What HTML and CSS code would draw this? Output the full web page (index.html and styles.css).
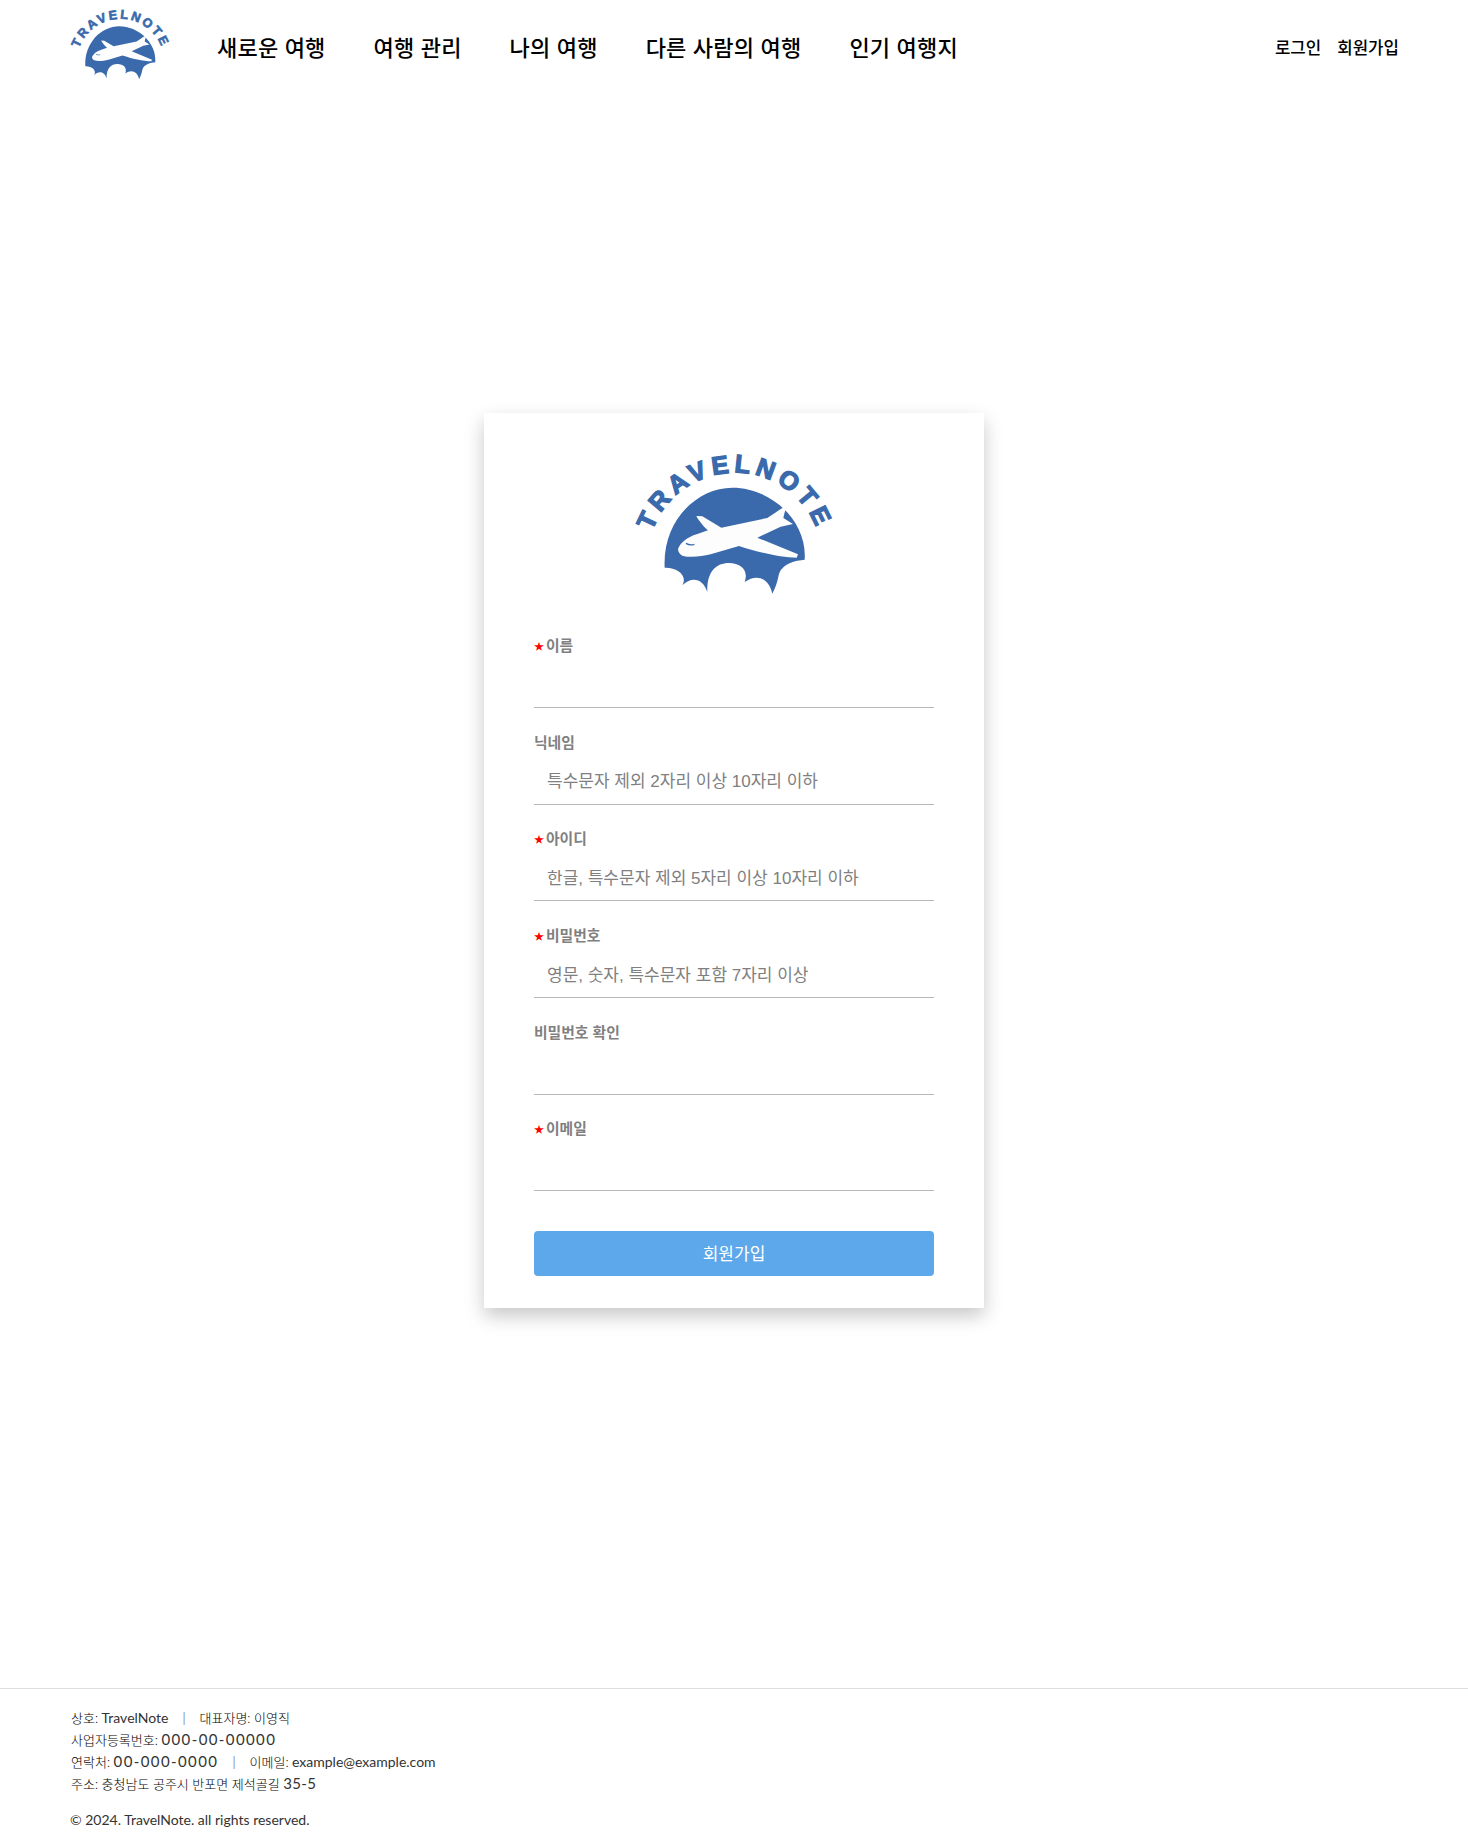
FILE: index.html
```html
<!DOCTYPE html>
<html lang="ko">
<head>
<meta charset="utf-8">
<title>TravelNote 회원가입</title>
<link rel="stylesheet" href="styles.css">
</head>
<body>
<header class="site-header">
  <svg class="logo logo-small" viewBox="100 50 600 450" aria-label="TravelNote">
    <defs><path id="arc-a" d="M140 390 A263 263 0 0 1 666 390"/></defs>
    <text class="logo-word"><textPath href="#arc-a" startOffset="50%" text-anchor="middle">TRAVELNOTE</textPath></text>
    <path class="dome" d="M192 412C185 270 290 172 395 172C510 172 620 270 612 388C585 390 545 400 535 430C530 455 525 470 515 490C505 445 470 428 432 455C445 420 420 398 385 398C345 398 318 425 320 485C305 440 270 440 245 465C262 435 228 410 192 412Z"/>
    <path class="plane" d="M232 356C240 335 262 320 288 312L322 300C310 290 295 272 287 257L305 258L362 292L500 263C518 252 532 240 547 232L555 236C552 245 550 254 548 263L577 281L540 289L470 322L592 372L588 382C540 382 470 365 415 347L330 372C300 380 265 382 245 376C238 372 232 365 232 356Z"/>
    <path class="cockpit" d="M256 339C264 344 272 345 281 342"/>
  </svg>
  <nav class="main-nav">
    <a>새로운 여행</a>
    <a>여행 관리</a>
    <a>나의 여행</a>
    <a>다른 사람의 여행</a>
    <a>인기 여행지</a>
  </nav>
  <div class="auth-links">
    <a>로그인</a>
    <a>회원가입</a>
  </div>
</header>

<main class="page-main">
  <form class="signup-card">
    <svg class="logo logo-large" viewBox="100 50 600 450" aria-label="TravelNote">
      <defs><path id="arc-b" d="M140 390 A263 263 0 0 1 666 390"/></defs>
      <text class="logo-word"><textPath href="#arc-b" startOffset="50%" text-anchor="middle">TRAVELNOTE</textPath></text>
      <path class="dome" d="M192 412C185 270 290 172 395 172C510 172 620 270 612 388C585 390 545 400 535 430C530 455 525 470 515 490C505 445 470 428 432 455C445 420 420 398 385 398C345 398 318 425 320 485C305 440 270 440 245 465C262 435 228 410 192 412Z"/>
      <path class="plane" d="M232 356C240 335 262 320 288 312L322 300C310 290 295 272 287 257L305 258L362 292L500 263C518 252 532 240 547 232L555 236C552 245 550 254 548 263L577 281L540 289L470 322L592 372L588 382C540 382 470 365 415 347L330 372C300 380 265 382 245 376C238 372 232 365 232 356Z"/>
      <path class="cockpit" d="M256 339C264 344 272 345 281 342"/>
    </svg>

    <div class="field">
      <label class="field-label"><span class="req">★</span>이름</label>
      <input class="field-input" type="text">
    </div>
    <div class="field">
      <label class="field-label">닉네임</label>
      <input class="field-input" type="text" placeholder="특수문자 제외 2자리 이상 10자리 이하">
    </div>
    <div class="field">
      <label class="field-label"><span class="req">★</span>아이디</label>
      <input class="field-input" type="text" placeholder="한글, 특수문자 제외 5자리 이상 10자리 이하">
    </div>
    <div class="field">
      <label class="field-label"><span class="req">★</span>비밀번호</label>
      <input class="field-input" type="text" placeholder="영문, 숫자, 특수문자 포함 7자리 이상">
    </div>
    <div class="field">
      <label class="field-label">비밀번호 확인</label>
      <input class="field-input" type="text">
    </div>
    <div class="field">
      <label class="field-label"><span class="req">★</span>이메일</label>
      <input class="field-input" type="text">
    </div>
    <button class="submit-btn" type="button">회원가입</button>
  </form>
</main>

<footer class="site-footer">
  <p>상호: <span class="en">TravelNote</span><span class="sep">|</span>대표자명: 이영직</p>
  <p>사업자등록번호: <span class="num">000-00-00000</span></p>
  <p>연락처: <span class="num">00-000-0000</span><span class="sep">|</span>이메일: <span class="en">example@example.com</span></p>
  <p>주소: 충청남도 공주시 반포면 제석골길 <span class="num num-short">35-5</span></p>
  <p class="copyright"><span class="en">© 2024. TravelNote. all rights reserved.</span></p>
</footer>
</body>
</html>
```

FILE: styles.css
```css
* { box-sizing: border-box; }

html, body { margin: 0; padding: 0; }

body {
  min-height: 1848px;
  display: flex;
  flex-direction: column;
  background: #fff;
  color: #000;
  font-family: "Liberation Sans", "Noto Sans CJK KR", sans-serif;
}

.logo { display: block; flex: none; overflow: visible; }
.logo-word {
  font-family: "Liberation Sans", Arial, sans-serif;
  font-weight: 700;
  font-size: 76px;
  letter-spacing: 14px;
  fill: #3a6aab;
  stroke: #3a6aab;
  stroke-width: 4px;
}
.dome { fill: #3a6aab; }
.plane { fill: #fdfdfe; }
.cockpit { fill: none; stroke: #3a6aab; stroke-width: 4; }

/* header */
.site-header {
  height: 95px;
  display: flex;
  align-items: center;
  padding: 0 69px 0 70px;
}
.logo-small { width: 100px; height: 75px; margin: -9px 47px 0 0; }
.main-nav {
  display: flex;
  gap: 48px;
  margin-top: 3px;
  font-size: 22px;
  font-weight: 500;
  letter-spacing: 0.2px;
  line-height: 30px;
}
.auth-links {
  margin-left: auto;
  margin-top: 3px;
  display: flex;
  gap: 16px;
  font-size: 16.8px;
  font-weight: 500;
  line-height: 22px;
}

/* main */
.page-main {
  flex: 1;
  display: flex;
  justify-content: center;
  align-items: flex-start;
  padding-top: 318px;
}
.signup-card {
  width: 500px;
  padding: 34px 50px 32px;
  background: #fff;
  box-shadow: 0 8px 18px rgba(0, 0, 0, 0.22);
}
.logo-large { width: 200px; height: 150px; margin: 0 auto 38px; }

.field { margin-bottom: 23.7px; }
.field-label {
  display: block;
  height: 22px;
  margin-bottom: 4px;
  font-size: 14.8px;
  font-weight: 700;
  line-height: 22px;
  color: #808080;
}
.req {
  display: inline-block;
  width: 12px;
  font-size: 10px;
  line-height: 10px;
  vertical-align: 1px;
  color: #f00;
}
.field-input {
  display: block;
  width: 100%;
  height: 47px;
  padding: 3px 13px 0;
  border: 0;
  border-bottom: 1px solid #b8b8b8;
  outline: 0;
  background: #fff;
  font-family: inherit;
  font-size: 17px;
}
.field-input::placeholder { color: #808080; opacity: 1; }

.submit-btn {
  display: block;
  width: 100%;
  height: 45px;
  margin-top: 40px;
  padding: 0 0 2px;
  border: 0;
  border-radius: 4px;
  background: #5da8ea;
  color: #fff;
  font-family: inherit;
  font-size: 17px;
}

/* footer */
.site-footer {
  height: 160px;
  padding: 18px 70px 0 71px;
  border-top: 1px solid #ddd;
  font-family: "Lato", "Noto Sans CJK KR", sans-serif;
  font-size: 13px;
  font-weight: 300;
  line-height: 22px;
  color: #000;
}
.site-footer p { margin: 0; height: 22px; }
.en { font-size: 14px; font-weight: 400; line-height: 1; color: #333; }
.num { font-size: 15px; font-weight: 400; letter-spacing: 1.4px; line-height: 1; color: #333; }
.num-short { letter-spacing: 0.4px; }
.sep { margin: 0 14px; line-height: 1; color: #333; }
.site-footer .copyright { margin-top: 14px; margin-left: -1px; }
```
